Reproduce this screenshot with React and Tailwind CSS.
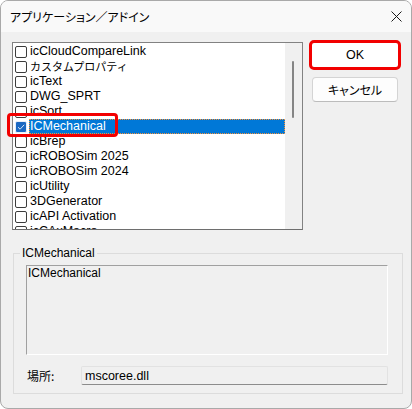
import React from "react";

const items = [
  "icCloudCompareLink",
  "カスタムプロパティ",
  "icText",
  "DWG_SPRT",
  "icSort",
  "ICMechanical",
  "icBrep",
  "icROBOSim 2025",
  "icROBOSim 2024",
  "icUtility",
  "3DGenerator",
  "icAPI Activation",
  "icCAxMacro",
];

const FONT = "font-['Liberation_Sans','Noto_Sans_CJK_JP',sans-serif]";
const JP = "font-['Noto_Sans_CJK_JP',sans-serif] [font-feature-settings:'palt']";

function Check() {
  return (
    <svg width="10" height="10" viewBox="0 0 10 10" className="block">
      <path d="M2 5.2 L4.1 7.2 L8.2 2.8" fill="none" stroke="#d6e6f8" strokeWidth="1" />
    </svg>
  );
}

function Row({ label, selected }) {
  const isJp = /[^\x00-\x7f]/.test(label);
  return (
    <div className="flex items-center h-[15px] pl-[2px] shrink-0">
      {selected ? (
        <div className="w-[12px] h-[12px] rounded-[2px] border border-[#e6eef8] bg-[#1a68c2] flex items-center justify-center shrink-0">
          <Check />
        </div>
      ) : (
        <div className="w-[12px] h-[12px] rounded-[2px] border border-[#3c3c3c] bg-white shrink-0" />
      )}
      {selected ? (
        <div className="ml-[2px] flex-1 h-[15px] bg-[#0078d7] border border-dotted border-[#f4923a] text-white flex items-center pl-[0px] text-[12.5px] leading-[13px]">
          {label}
        </div>
      ) : (
        <div
          className={
            "ml-[3px] text-black whitespace-nowrap " +
            (isJp ? "text-[11px] leading-[15px] " + "font-['Noto_Sans_CJK_JP',sans-serif]" : "text-[12.5px] leading-[15px]")
          }
        >
          {label}
        </div>
      )}
    </div>
  );
}

export default function App() {
  return (
    <div className={"w-[412px] h-[409px] bg-white " + FONT}>
      <div className="w-[412px] h-[409px] rounded-[8px] border border-[#a9a9a9] overflow-hidden flex flex-col bg-[#f0f0f0]">
        {/* Title bar */}
        <div className="h-[31px] bg-[#f9f9f9] flex items-center justify-between shrink-0">
          <div className={"ml-[9px] text-[12px] leading-[14px] text-black " + JP}>
            アプリケーション／アドイン
          </div>
          <div className="mr-[9px] w-[11px] h-[11px]">
            <svg width="11" height="11" viewBox="0 0 11 11" className="block">
              <path d="M0.5 0.5 L10.5 10.5 M10.5 0.5 L0.5 10.5" stroke="#1a1a1a" strokeWidth="1" />
            </svg>
          </div>
        </div>

        {/* Body */}
        <div className="flex-1 pl-[11px] pt-[10px] flex flex-col">
          <div className="flex">
            {/* List */}
            <div className="relative w-[291px] h-[188px] shrink-0">
              <div className="w-full h-full border border-[#828282] border-b-[#6e6e6e] bg-white flex overflow-hidden">
                <div className="flex-1 flex flex-col pt-[1px] overflow-hidden">
                  {items.map((it, i) => (
                    <Row key={i} label={it} selected={i === 5} />
                  ))}
                </div>
                <div className="w-[17px] bg-[#f0f0f0] shrink-0">
                  <div className="ml-[7px] mt-[18px] w-[2px] h-[57px] rounded-full bg-[#858585]" />
                </div>
              </div>
              <div className="absolute left-[-5px] top-[71px] w-[111px] h-[24px] border-[3px] border-[#f20000] rounded-[4px]" />
            </div>

            {/* Buttons */}
            <div className="ml-[9px] mt-[1px] flex flex-col gap-[10px]">
              <button className="w-[86px] h-[24px] bg-white rounded-[2px] outline-[3px] outline-solid outline-[#f20000] text-[12.5px] leading-[14px] text-black flex items-center justify-center">
                OK
              </button>
              <button className={"w-[86px] h-[25px] bg-[#fdfdfd] rounded-[4px] border border-[#d4d4d4] border-b-[#bcbcbc] text-[12px] leading-[14px] text-black flex items-center justify-center " + JP}>
                キャンセル
              </button>
            </div>
          </div>

          {/* Group box */}
          <fieldset className="ml-[1px] mt-[16px] w-[390px] border border-[#dcdcdc]">
            <legend className="ml-[6px] px-[2px] text-[12px] leading-[14px] text-black">ICMechanical</legend>
            <div className="pl-[12px] pr-[14px] pt-[5px] pb-[8px] flex flex-col">
              <div className="h-[90px] border border-[#a0a0a0] border-r-white border-b-white bg-[#f0f0f0] pl-[1px] text-[12px] leading-[14px] text-black">
                ICMechanical
              </div>
              <div className="mt-[11px] flex items-center">
                <div className={"w-[55px] pl-[1px] text-[12px] leading-[14px] text-black shrink-0 font-['Noto_Sans_CJK_JP',sans-serif]"}>
                  場所:
                </div>
                <div className="flex-1 h-[19px] border border-[#e2e2e2] border-b-[#8c8c8c] rounded-[2px] bg-[#f0f0f0] pl-[3px] flex items-center text-[12.5px] leading-[14px] text-black">
                  mscoree.dll
                </div>
              </div>
            </div>
          </fieldset>
        </div>
      </div>
    </div>
  );
}
